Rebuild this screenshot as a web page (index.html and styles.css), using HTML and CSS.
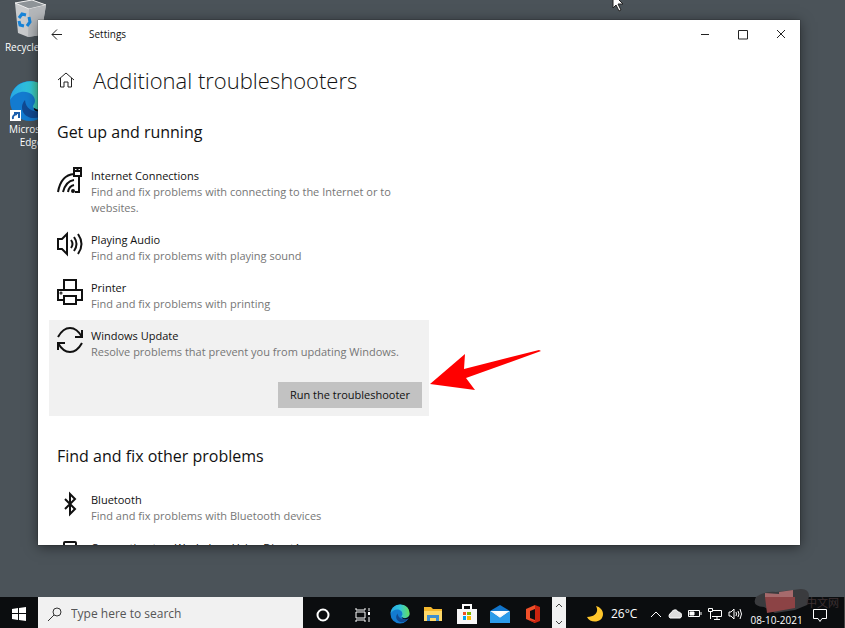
FILE: index.html
```html
<!DOCTYPE html>
<html lang="en">
<head>
  <meta charset="UTF-8" />
  <meta name="viewport" content="width=device-width, initial-scale=1.0" />
  <title>Settings</title>
  <link rel="stylesheet" href="styles.css">
</head>
<body>
  <div class="desktop">
    <a class="shortcut bin" href="#">
      <svg width="34" height="38" viewBox="0 0 34 38">
        <path d="M1 3 18 0l14 5-5 30-13 2-10-4z" fill="#c9cbcd"/>
        <path d="M1 3 18 0l14 5-17 4z" fill="#8e9498" stroke="#eee"/>
        <path d="m15 9 17-4-5 30-13 2z" fill="#b4b7ba"/>
        <g fill="none" stroke="#1683d8" stroke-width="3"><path d="m5 18 3-4 4 1M15 17l1 5-3 4M10 26l-4-1-1-4"/></g>
      </svg>
      <span>Recycle Bin</span>
    </a>
    <a class="shortcut edge" href="#">
      <svg width="44" height="42" viewBox="0 0 44 42">
        <use href="#edge-logo" width="42" height="42"/>
        <path d="M1 30h11v11H1z" fill="#fff"/>
        <path d="M4 39q-1-4 4-5M5 33h5v5" fill="none" stroke="#1b5fae" stroke-width="2"/>
      </svg>
      <span>Microsoft Edge</span>
    </a>
    <svg class="cursor" width="13" height="20" viewBox="0 0 13 20"><path d="M1 1v14l3-3 3 6 2-1-3-6h5z" fill="#fff" stroke="#222"/></svg>

    <main class="window">
      <div class="titlebar">
        <button class="back" aria-label="Back"><svg width="12" height="12" viewBox="0 0 12 12"><path d="M11 5.500H1M6 .500 1 5.500l5 5"/></svg></button>
        <span class="title">Settings</span>
        <button aria-label="Minimize"><svg width="10" height="10" viewBox="0 0 10 10"><path d="M1 4.500h8"/></svg></button>
        <button aria-label="Maximize"><svg width="10" height="10" viewBox="0 0 10 10"><path d="M.5.500h9v8.500h-9z"/></svg></button>
        <button aria-label="Close"><svg width="10" height="10" viewBox="0 0 10 10"><path d="m1 0 8 8M9 0 1 8"/></svg></button>
      </div>
      <div class="page">
        <div class="heading">
          <a href="#" aria-label="Home"><svg width="18" height="18" viewBox="0 0 18 18"><path d="m1 9 8-7 8 7M3.500 7v9H7v-5h4v5h3.500V7"/></svg></a>
          <h1>Additional troubleshooters</h1>
        </div>

        <h2>Get up and running</h2>
        <ul class="list">
          <li>
            <svg width="28" height="28" viewBox="0 0 28 28"><path d="M2 26Q5 9 18 8M7 26q3-11 11-12M12 26q1-6 6-7M23 9v17h-4M18 2h7v8h-7zM18 5h7M21.500 2v3"/><circle cx="17" cy="25" r="1"/></svg>
            <div><h3>Internet Connections</h3><p>Find and fix problems with connecting to the Internet or to websites.</p></div>
          </li>
          <li>
            <svg width="28" height="28" viewBox="0 0 28 28"><path d="M2 9v10h4l5 5V4L6 9zM15 10q3 4 0 8M18 7q5 7 0 14M22 4q7 10 0 20"/></svg>
            <div><h3>Playing Audio</h3><p>Find and fix problems with playing sound</p></div>
          </li>
          <li>
            <svg width="28" height="28" viewBox="0 0 28 28"><path d="M8 12V2h12v10M8 22H2V12h24v10h-6M8 18h12v8H8z"/><circle cx="5" cy="15" r=".5"/></svg>
            <div><h3>Printer</h3><p>Find and fix problems with printing</p></div>
          </li>
          <li class="selected">
            <svg width="28" height="28" viewBox="0 0 28 28"><path d="M2 11Q7 2 14 2t12 9M26 4v7h-7M26 17q-5 9-12 9T2 17M2 24v-7h7"/></svg>
            <div><h3>Windows Update</h3><p>Resolve problems that prevent you from updating Windows.</p></div>
            <button class="run">Run the troubleshooter</button>
            <svg class="arrow" width="112" height="44" viewBox="0 0 112 44"><path d="M0 35 35 5l-1 15 75-19 2 1-75 27 9 12z"/></svg>
          </li>
        </ul>

        <h2>Find and fix other problems</h2>
        <ul class="list">
          <li>
            <svg width="28" height="28" viewBox="0 0 28 28"><path d="m9 9 10 10-5 5V4l5 5L9 19"/></svg>
            <div><h3>Bluetooth</h3><p>Find and fix problems with Bluetooth devices</p></div>
          </li>
          <li>
            <svg width="28" height="28" viewBox="0 0 28 28"><rect x="8" y="4" width="12" height="22" rx="1"/></svg>
            <div><h3>Connection to a Workplace Using DirectAccess</h3></div>
          </li>
        </ul>
      </div>
    </main>
  </div>

  <footer class="taskbar">
    <button class="start" aria-label="Start"><svg width="14" height="14" viewBox="0 0 14 14"><path d="m0 2 6-1v5H0zM7 1l7-1v6H7zM0 7h6v6l-6-1zM7 7h7v7l-7-1z" fill="#fff"/></svg></button>
    <label class="search">
      <svg width="16" height="16" viewBox="0 0 16 16"><circle cx="10" cy="6" r="4"/><path d="m7 9-6 6"/></svg>
      <input type="text" placeholder="Type here to search" aria-label="Search">
    </label>
    <div class="apps">
      <button class="system" aria-label="Cortana"><svg width="14" height="14" viewBox="0 0 14 14"><circle cx="7" cy="7" r="5.500" fill="none" stroke="#fff" stroke-width="2"/></svg></button>
      <button class="system" aria-label="Task view"><svg width="16" height="14" viewBox="0 0 16 14"><path d="M1 0v2h9V0M1 14v-2h9v2M1 4h9v6H1zM14 0v3M14 9v5" fill="none" stroke="#fff"/><path d="M13 4h2v3h-2z" fill="#fff"/></svg></button>
      <button aria-label="Edge"><svg width="20" height="20" viewBox="0 0 42 42">
        <symbol id="edge-logo" viewBox="0 0 42 42">
          <linearGradient id="wave" x1="0" x2="1"><stop offset="0" stop-color="#28a6e3"/><stop offset=".5" stop-color="#31c6db"/><stop offset="1" stop-color="#66df5c"/></linearGradient>
          <circle cx="21" cy="21" r="20" fill="#137bd0"/>
          <path d="M1 20C4-6 41-4 41 20c0 8-9 12-16 8-3-2 1-3 1-7 0-10-17-14-25-1z" fill="url(#wave)"/>
          <path d="M16 20c-8 9 1 22 15 17 4-1 7-5 9-8-8 5-23 4-24-9z" fill="#114a93"/>
          <path d="M25 28c6 4 13 1 16-4l1 5-4 2c-8 2-14 0-13-3z" fill="#0b0d0e"/>
        </symbol>
        <use href="#edge-logo" width="42" height="42"/></svg></button>
      <button aria-label="File Explorer"><svg width="18" height="18" viewBox="0 0 18 18"><path d="M0 2h7l2 2h9v12H0z" fill="#f5b82e"/><path d="M0 6h18v10H0z" fill="#ffd968"/><path d="M3 16v-6h12v6h-3v-3H6v3z" fill="#3f8fd0"/></svg></button>
      <button aria-label="Store"><svg width="20" height="20" viewBox="0 0 20 20"><path d="M6 6V1h8v5" fill="none" stroke="#fff" stroke-width="2"/><path d="M0 5h20v15H0z" fill="#f7f7f7"/><path d="M6 8h3v3H6z" fill="#f05124"/><path d="M10 8h4v3h-4z" fill="#7eb800"/><path d="M6 12h3v4H6z" fill="#00a3ee"/><path d="M10 12h4v4h-4z" fill="#ffb800"/></svg></button>
      <button aria-label="Mail"><svg width="22" height="20" viewBox="0 0 22 20"><path d="m1 7 10-6 10 6v12H1z" fill="#1174c9"/><path d="M1 7h20l-10 7z" fill="#f4f7fa"/><path d="m1 7 10 7 10-7v12H1z" fill="#2b9be9"/><path d="m4 7 7 5 7-5z" fill="#fff"/></svg></button>
      <button aria-label="Office"><svg width="16" height="20" viewBox="0 0 16 20"><path d="m1 5 9-4v4L5 7v7l5 2v3l-9-4z" fill="#f0502a"/><path d="m10 1 5 2v14l-5 2-6-3 6 1z" fill="#c9230f"/></svg></button>
    </div>
    <div class="scroller">
      <button aria-label="Scroll up"><svg width="8" height="5" viewBox="0 0 8 5"><path d="m1 4 3-3 3 3"/></svg></button>
      <button aria-label="Scroll down"><svg width="8" height="5" viewBox="0 0 8 5"><path d="m1 1 3 3 3-3"/></svg></button>
    </div>
    <div class="tray">
      <button class="weather"><svg width="16" height="16" viewBox="0 0 16 16"><path d="M9 0c3 5 0 11-9 11 3 7 16 6 16-3 0-4-3-7-7-8z" fill="#ffc62b"/></svg>26°C</button>
      <div class="status">
        <svg width="12" height="8" viewBox="0 0 12 8"><path d="m1 7 5-5 5 5"/></svg>
        <svg width="14" height="10" viewBox="0 0 14 10"><path d="M2 9a3 3 0 0 1 1-5c2-4 6-4 7-1 4 0 5 5 2 6z" fill="#ddd"/></svg>
        <svg width="14" height="9" viewBox="0 0 14 9"><path d="M.5 1.500h11v6H.5zM13 3v3"/><path d="M2 3h4v3H2z" fill="#fff"/></svg>
        <svg width="14" height="12" viewBox="0 0 14 12"><path d="M5 2.500h8.500v6H4M9 9v2.500M6 11.500h6M.5.500h4v3h-4zM2.500 4v7"/></svg>
        <svg width="15" height="12" viewBox="0 0 15 12"><path d="M1 4v4h2l3 3V1L3 4zM8 4q1 2 0 4M10 3q2 3 0 6M12 1q3 5 0 10"/></svg>
      </div>
      <time class="clock">08-10-2021</time>
      <svg class="smudge" width="60" height="28" viewBox="0 0 60 28">
        <path d="M3 9q8-6 20-5L48 1q8 0 8 7l-2 9-12 5-20 3-11-6Q-2 18 3 9z" fill="#3a3b3e"/>
        <path d="m12 5 14 1V4l14-2v7H12z" fill="#a66a6c"/>
        <path d="M12 9h30v11l-28 5z" fill="#8c4345"/>
      </svg>
      <span class="watermark">中文网</span>
      <button class="notify" aria-label="Notifications"><svg width="14" height="14" viewBox="0 0 14 14"><path d="M.5 1.500h13v9H9l-2 3-2-3H.5z"/></svg></button>
    </div>
  </footer>
</body>
</html>
```
FILE: styles.css
```css
:root {
  --desktop: #4b5359;
  --bar: #0b0d0f;
  --text: #111;
  --muted: #767676;
}

* {
  box-sizing: border-box;
}

body {
  margin: 0;
  height: 100vh;
  display: flex;
  flex-direction: column;
  overflow: hidden;
  background: var(--desktop);
  color: var(--text);
  font: 11px/16px 'Open Sans', 'Noto Sans', sans-serif;
}

button {
  border: none;
  padding: 0;
  background: transparent;
  color: inherit;
  font: inherit;
}

button svg {
  vertical-align: middle;
}

svg {
  flex: none;
}

h1, h2, h3, p, ul {
  margin: 0;
  padding: 0;
  font-weight: 400;
}

.desktop {
  position: relative;
  flex: 1;
  min-height: 0;
  display: flex;
  padding: 20px 45px 52px 38px;
}

.shortcut {
  position: absolute;
  width: 62px;
  display: flex;
  flex-direction: column;
  align-items: center;
  color: #fff;
  font-size: 10px;
  line-height: 13px;
  text-align: center;
  text-decoration: none;
}

.bin {
  left: 0;
  top: 0;
  gap: 3px;
}

.edge {
  left: 0;
  top: 80px;
  gap: 1px;
}

.cursor {
  position: absolute;
  left: 612px;
  top: -7px;
}

.window {
  position: relative;
  flex: 1;
  min-width: 0;
  display: flex;
  flex-direction: column;
  background: #fff;
  box-shadow: 0 2px 12px rgba(0, 0, 0, 0.5), 0 0 1px #222;
}

.titlebar {
  display: flex;
  align-items: center;
  height: 28px;
}

.titlebar button {
  width: 38px;
  height: 28px;
}

.titlebar svg, .heading svg {
  fill: none;
  stroke: #222;
}

.title {
  flex: 1;
  padding-left: 13px;
  font-size: 10px;
}

.page {
  flex: 1;
  min-height: 0;
  overflow: hidden;
  padding: 14px 11px 0;
}

.heading {
  display: flex;
  align-items: center;
  gap: 18px;
  padding-left: 8px;
}

.heading a {
  display: flex;
}

h1 {
  font-size: 22px;
  font-weight: 300;
  line-height: 36px;
}

h2 {
  margin: 22px 0 16px 8px;
  font-size: 16px;
  line-height: 24px;
}

.list + h2 {
  margin-top: 28px;
}

.list {
  width: 380px;
  max-width: 100%;
  list-style: none;
}

.list li {
  position: relative;
  display: flex;
  flex-wrap: wrap;
  align-items: flex-start;
  gap: 0 7px;
  padding: 8px 7px;
}

.list li > div {
  flex: 0 0 calc(100% - 35px);
  padding-right: 16px;
}

.list svg {
  margin-top: -2px;
  fill: none;
  stroke: #111;
  stroke-width: 2;
}

h3 {
  font-size: 11px;
  line-height: 16px;
}

p {
  color: var(--muted);
}

.list .selected {
  background: #f1f1f1;
}

.selected .run {
  margin: 22px 0 0 auto;
  padding: 0 12px;
  height: 26px;
  background: #c2c2c2;
}

.list .arrow {
  position: absolute;
  left: 381px;
  top: 31px;
  fill: #f00;
  stroke: none;
}

.taskbar {
  display: flex;
  height: 31px;
  background: var(--bar);
  color: #fff;
}

.start {
  width: 38px;
}

.search {
  display: flex;
  align-items: center;
  gap: 8px;
  width: 265px;
  padding: 2px 9px 0;
  background: #f1f1f1;
}

.search svg {
  fill: none;
  stroke: #333;
}

.search input {
  flex: 1;
  min-width: 0;
  border: none;
  padding: 0;
  background: transparent;
  font: 12px 'Open Sans', 'Noto Sans', sans-serif;
}

.search input::placeholder {
  color: #555;
}

.apps {
  display: flex;
  flex: 1;
  padding: 2px 2px 0 0;
}

.apps button {
  flex: 1;
}

.apps .system {
  flex: 0 0 40px;
}

.scroller {
  display: flex;
  flex-direction: column;
  justify-content: space-between;
  width: 14px;
  background: #f1f1f1;
}

.scroller button {
  height: 14px;
  line-height: 10px;
}

.scroller svg {
  fill: none;
  stroke: #444;
}

.tray {
  position: relative;
  display: flex;
  align-items: center;
  width: 279px;
  padding: 2px 17px 0 21px;
  border-right: 1px solid #444;
}

.weather {
  display: flex;
  align-items: center;
  gap: 8px;
  font-size: 12px;
}

.status {
  display: flex;
  align-items: center;
  gap: 6px;
  margin-left: 13px;
}

.status svg, .notify svg {
  fill: none;
  stroke: #fff;
}

.clock {
  align-self: flex-end;
  margin-left: 7px;
  font-size: 10px;
}

.notify {
  margin-left: auto;
}

.smudge {
  position: absolute;
  left: 187px;
  top: -9px;
}

.watermark {
  position: absolute;
  right: 5px;
  top: -2px;
  color: #3d3032;
  font-family: 'Open Sans', 'Noto Sans CJK SC', sans-serif;
}
```
